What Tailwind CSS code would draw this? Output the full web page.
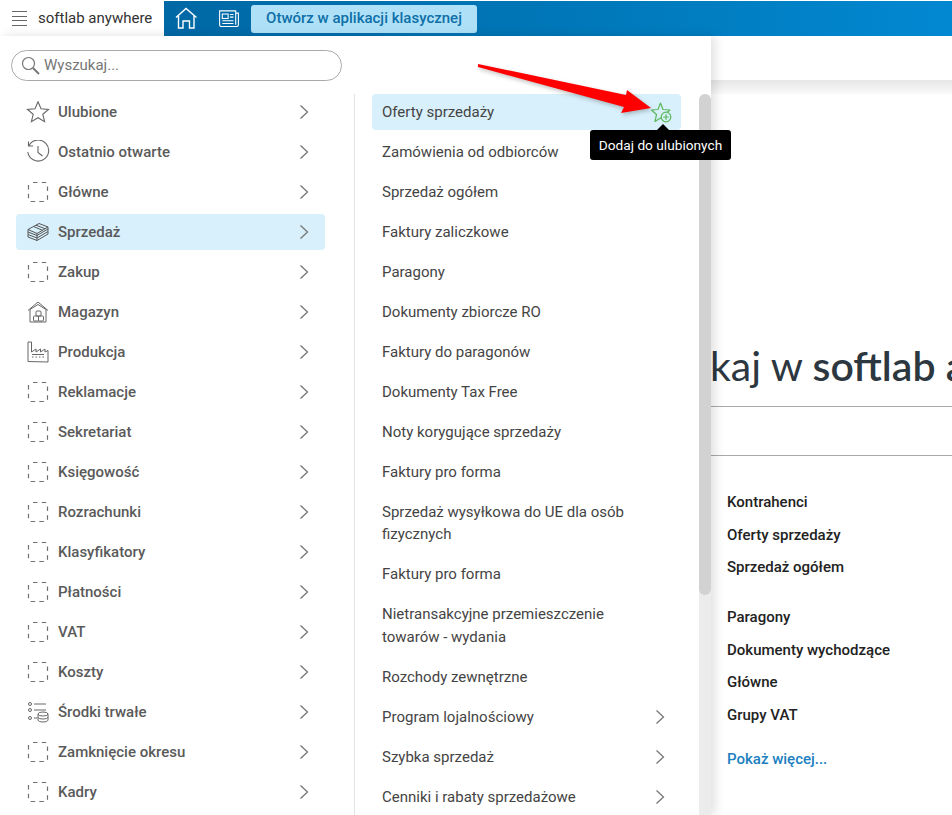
<!DOCTYPE html>
<html lang="pl">
<head>
    <meta charset="UTF-8">
    <title>softlab anywhere</title>
    <script src="https://cdn.jsdelivr.net/npm/@tailwindcss/browser@4"></script>
</head>
<body class="bg-white font-['Roboto',sans-serif] overflow-hidden">
<svg class="hidden">
    <symbol id="dash" viewBox="0 0 22 22"><rect x="1.500" y="1.500" width="19" height="19" rx="2.500" fill="none" stroke="#707070" stroke-width="1.200" stroke-dasharray="4.500 4.200" stroke-dashoffset="-2"/></symbol>
    <symbol id="chev" viewBox="0 0 10 16"><path d="M1.500 1.500 8.500 8l-7 6.500" fill="none" stroke="#777" stroke-width="1.300"/></symbol>
</svg>
<div class="relative w-[952px] h-[815px] overflow-hidden">

    <!-- top bar -->
    <header class="flex h-9 pt-px items-stretch">
        <div class="w-[164px] flex items-center bg-white pl-3">
            <div class="w-[15px] flex flex-col gap-[3.500px]">
                <span class="h-px bg-[#666]"></span><span class="h-px bg-[#666]"></span><span class="h-px bg-[#666]"></span><span class="h-px bg-[#666]"></span>
            </div>
            <span class="ml-[11px] text-[15px] text-[#333] whitespace-nowrap">softlab anywhere</span>
        </div>
        <div class="flex-1 flex items-center bg-gradient-to-r from-[#0068a5] via-[#0077b8] to-[#0288d1]">
            <svg class="ml-[10px] w-6 h-6" viewBox="0 0 24 24" fill="none" stroke="#fff" stroke-width="1.400"><path d="M2 10.500 12 1.500l10.500 9M4.500 9v12H9v-7h6.500v7H20V9"/></svg>
            <svg class="ml-5 w-[22px] h-[17px]" viewBox="0 0 23 19" fill="none" stroke="#fff" stroke-width="1.200"><path d="M19 3.500h3v13a2 2 0 0 1-2 2H3a2 2 0 0 1-2-2V1h18v15.500"/><rect x="4" y="4.500" width="6.500" height="5"/><path d="M12.500 5h4M12.500 8h4M4 12h12.500M4 15h12.500"/></svg>
            <button class="ml-[11px] w-[226px] h-7 rounded-[3px] bg-[#aee1f7] text-[#0f6fa8] text-[15px] font-medium">Otwórz w aplikacji klasycznej</button>
        </div>
    </header>

    <!-- page behind the menu -->
    <main class="pl-[711px]">
        <div class="h-11 bg-white"></div>
        <div class="h-[14px] bg-gradient-to-b from-[#e6e6e6] to-[#fafafa]"></div>
        <div class="relative h-[721px]">
            <h1 class="absolute left-[-64px] top-[247px] text-[41px] leading-[50px] text-[#2c3740] font-['Lato',sans-serif] whitespace-nowrap">Szukaj w <span class="font-semibold">softlab anywhere</span></h1>
            <div class="h-[313px] border-b border-[#aaa]"></div>
            <div class="h-[49px] border-b border-[#aaa]"></div>
            <ul class="pl-4 pt-[30px] text-[15px] font-medium text-[#222] leading-[32.500px]">
                <li>Kontrahenci</li>
                <li>Oferty sprzedaży</li>
                <li>Sprzedaż ogółem</li>
                <li class="mt-[17.500px]">Paragony</li>
                <li>Dokumenty wychodzące</li>
                <li>Główne</li>
                <li>Grupy VAT</li>
                <li class="mt-3 text-[#1b7fc0]">Pokaż więcej...</li>
            </ul>
        </div>
    </main>

    <!-- menu -->
    <aside class="absolute left-0 top-9 w-[711px] h-[779px] bg-white shadow-[4px_0_10px_rgba(0,0,0,0.12)]">
        <div class="ml-[11px] mt-[14px] w-[331px] h-[31px] rounded-full border border-[#aaa] flex items-center pl-[9px]">
            <svg class="w-[19px] h-[19px]" viewBox="0 0 19 19" fill="none" stroke="#777" stroke-width="1.200"><circle cx="7.500" cy="7.500" r="6"/><path d="m12 12 6 6" stroke-width="2"/></svg>
            <span class="ml-[4px] text-[15px] text-[#777]">Wyszukaj...</span>
        </div>
        <div class="mt-[13px] flex">
            <nav class="w-[355px] pl-4 pr-[29px] border-r border-[#e3e3e3] text-[15px] font-medium text-[#5a5a5a]">
                <a class="flex items-center h-9 mb-1 pl-[10px] pr-4">
                    <svg class="w-6 h-6 mr-2 shrink-0" viewBox="0 0 24 24" fill="none" stroke="#666" stroke-width="1.100"><path d="m12 1.800 3 7 7.500.6-5.700 4.900 1.800 7.400L12 17.700l-6.600 4 1.800-7.400L1.500 9.400 9 8.800z"/></svg>
                    <span class="flex-1">Ulubione</span><svg class="w-[10px] h-4"><use href="#chev"/></svg>
                </a>
                <a class="flex items-center h-9 mb-1 pl-[10px] pr-4">
                    <svg class="w-6 h-6 mr-2 shrink-0" viewBox="0 0 24 24" fill="none" stroke="#666" stroke-width="1.100"><path d="M3 5.500A10.500 10.500 0 1 1 1.800 12M2.500 1.500v4.500H7M12 6v6.500l4.500 3.500"/></svg>
                    <span class="flex-1">Ostatnio otwarte</span><svg class="w-[10px] h-4"><use href="#chev"/></svg>
                </a>
                <a class="flex items-center h-9 mb-1 pl-[10px] pr-4">
                    <svg class="w-[22px] h-[22px] ml-px mr-[9px] shrink-0"><use href="#dash"/></svg>
                    <span class="flex-1">Główne</span><svg class="w-[10px] h-4"><use href="#chev"/></svg>
                </a>
                <a class="flex items-center h-9 mb-1 pl-[10px] pr-4 rounded-[4px] bg-[#d8f0fb]">
                    <svg class="w-6 h-6 mr-2 shrink-0" viewBox="0 0 24 24" fill="none" stroke="#555" stroke-width="1"><path d="M2 9.500 13 3.500l9 3.500-11 6.500zM2 9.500v2.500l9 3.500 11-6.500V7M2 12v2.500l9 3.500 11-6.500V9M2 14.500V17l9 3.500L22 14v-2.500M11 13.500v7M7.500 6.500l9 3.800M10 5.200l9 3.500"/></svg>
                    <span class="flex-1">Sprzedaż</span><svg class="w-[10px] h-4"><use href="#chev"/></svg>
                </a>
                <a class="flex items-center h-9 mb-1 pl-[10px] pr-4">
                    <svg class="w-[22px] h-[22px] ml-px mr-[9px] shrink-0"><use href="#dash"/></svg>
                    <span class="flex-1">Zakup</span><svg class="w-[10px] h-4"><use href="#chev"/></svg>
                </a>
                <a class="flex items-center h-9 mb-1 pl-[10px] pr-4">
                    <svg class="w-6 h-6 mr-2 shrink-0" viewBox="0 0 24 24" fill="none" stroke="#666" stroke-width="1"><path d="M2 10.500 12 2l10 8.500M4 9.500 12 4.500l8 5M4 9.500V22h16V9.500"/><rect x="7.500" y="16" width="5" height="5" rx="1"/><rect x="12.500" y="16" width="5" height="5" rx="1"/><rect x="10" y="11" width="5" height="5" rx="1"/></svg>
                    <span class="flex-1">Magazyn</span><svg class="w-[10px] h-4"><use href="#chev"/></svg>
                </a>
                <a class="flex items-center h-9 mb-1 pl-[10px] pr-4">
                    <svg class="w-6 h-6 mr-2 shrink-0" viewBox="0 0 24 24" fill="none" stroke="#666" stroke-width="1"><path d="M2 21.500V2h3.500v10l4.500-3v3l4.500-3v3l4.500-3v3l3-1.500v11.500zM6 17h1.500M9.500 17H11M13 17h1.500M16.500 17H18M6 14.500h12"/></svg>
                    <span class="flex-1">Produkcja</span><svg class="w-[10px] h-4"><use href="#chev"/></svg>
                </a>
                <a class="flex items-center h-9 mb-1 pl-[10px] pr-4">
                    <svg class="w-[22px] h-[22px] ml-px mr-[9px] shrink-0"><use href="#dash"/></svg>
                    <span class="flex-1">Reklamacje</span><svg class="w-[10px] h-4"><use href="#chev"/></svg>
                </a>
                <a class="flex items-center h-9 mb-1 pl-[10px] pr-4">
                    <svg class="w-[22px] h-[22px] ml-px mr-[9px] shrink-0"><use href="#dash"/></svg>
                    <span class="flex-1">Sekretariat</span><svg class="w-[10px] h-4"><use href="#chev"/></svg>
                </a>
                <a class="flex items-center h-9 mb-1 pl-[10px] pr-4">
                    <svg class="w-[22px] h-[22px] ml-px mr-[9px] shrink-0"><use href="#dash"/></svg>
                    <span class="flex-1">Księgowość</span><svg class="w-[10px] h-4"><use href="#chev"/></svg>
                </a>
                <a class="flex items-center h-9 mb-1 pl-[10px] pr-4">
                    <svg class="w-[22px] h-[22px] ml-px mr-[9px] shrink-0"><use href="#dash"/></svg>
                    <span class="flex-1">Rozrachunki</span><svg class="w-[10px] h-4"><use href="#chev"/></svg>
                </a>
                <a class="flex items-center h-9 mb-1 pl-[10px] pr-4">
                    <svg class="w-[22px] h-[22px] ml-px mr-[9px] shrink-0"><use href="#dash"/></svg>
                    <span class="flex-1">Klasyfikatory</span><svg class="w-[10px] h-4"><use href="#chev"/></svg>
                </a>
                <a class="flex items-center h-9 mb-1 pl-[10px] pr-4">
                    <svg class="w-[22px] h-[22px] ml-px mr-[9px] shrink-0"><use href="#dash"/></svg>
                    <span class="flex-1">Płatności</span><svg class="w-[10px] h-4"><use href="#chev"/></svg>
                </a>
                <a class="flex items-center h-9 mb-1 pl-[10px] pr-4">
                    <svg class="w-[22px] h-[22px] ml-px mr-[9px] shrink-0"><use href="#dash"/></svg>
                    <span class="flex-1">VAT</span><svg class="w-[10px] h-4"><use href="#chev"/></svg>
                </a>
                <a class="flex items-center h-9 mb-1 pl-[10px] pr-4">
                    <svg class="w-[22px] h-[22px] ml-px mr-[9px] shrink-0"><use href="#dash"/></svg>
                    <span class="flex-1">Koszty</span><svg class="w-[10px] h-4"><use href="#chev"/></svg>
                </a>
                <a class="flex items-center h-9 mb-1 pl-[10px] pr-4">
                    <svg class="w-6 h-6 mr-2 shrink-0" viewBox="0 0 24 24" fill="none" stroke="#666" stroke-width="1"><circle cx="4" cy="4" r="1.500"/><circle cx="4" cy="10" r="1.500"/><circle cx="4" cy="18" r="1.500"/><path d="M8 4h12M8 10h12M8 18h3"/><ellipse cx="17" cy="14" rx="5" ry="2"/><path d="M12 14v6c0 1.200 2.200 2 5 2s5-.8 5-2v-6M12 17c0 1.200 2.200 2 5 2s5-.8 5-2"/></svg>
                    <span class="flex-1">Środki trwałe</span><svg class="w-[10px] h-4"><use href="#chev"/></svg>
                </a>
                <a class="flex items-center h-9 mb-1 pl-[10px] pr-4">
                    <svg class="w-[22px] h-[22px] ml-px mr-[9px] shrink-0"><use href="#dash"/></svg>
                    <span class="flex-1">Zamknięcie okresu</span><svg class="w-[10px] h-4"><use href="#chev"/></svg>
                </a>
                <a class="flex items-center h-9 mb-1 pl-[10px] pr-4">
                    <svg class="w-[22px] h-[22px] ml-px mr-[9px] shrink-0"><use href="#dash"/></svg>
                    <span class="flex-1">Kadry</span><svg class="w-[10px] h-4"><use href="#chev"/></svg>
                </a>
            </nav>

            <ul class="w-[344px] pl-[17px] pr-[18px] text-[15px] text-[#444] leading-[22.500px]">
                <li class="mb-1 px-[10px] py-[6.750px] rounded-[4px] bg-[#d8f0fb]">Oferty sprzedaży</li>
                <li class="mb-1 px-[10px] py-[6.750px]">Zamówienia od odbiorców</li>
                <li class="mb-1 px-[10px] py-[6.750px]">Sprzedaż ogółem</li>
                <li class="mb-1 px-[10px] py-[6.750px]">Faktury zaliczkowe</li>
                <li class="mb-1 px-[10px] py-[6.750px]">Paragony</li>
                <li class="mb-1 px-[10px] py-[6.750px]">Dokumenty zbiorcze RO</li>
                <li class="mb-1 px-[10px] py-[6.750px]">Faktury do paragonów</li>
                <li class="mb-1 px-[10px] py-[6.750px]">Dokumenty Tax Free</li>
                <li class="mb-1 px-[10px] py-[6.750px]">Noty korygujące sprzedaży</li>
                <li class="mb-1 px-[10px] py-[6.750px]">Faktury pro forma</li>
                <li class="mb-1 px-[10px] py-[6.750px]">Sprzedaż wysyłkowa do UE dla osób fizycznych</li>
                <li class="mb-1 px-[10px] py-[6.750px]">Faktury pro forma</li>
                <li class="mb-1 pl-[10px] pr-10 py-[6.750px]">Nietransakcyjne przemieszczenie towarów - wydania</li>
                <li class="mb-1 px-[10px] py-[6.750px]">Rozchody zewnętrzne</li>
                <li class="mb-1 pl-[10px] pr-4 py-[6.750px] flex items-center"><span class="flex-1">Program lojalnościowy</span><svg class="w-[10px] h-4"><use href="#chev"/></svg></li>
                <li class="mb-1 pl-[10px] pr-4 py-[6.750px] flex items-center"><span class="flex-1">Szybka sprzedaż</span><svg class="w-[10px] h-4"><use href="#chev"/></svg></li>
                <li class="mb-1 pl-[10px] pr-4 py-[6.750px] flex items-center"><span class="flex-1">Cenniki i rabaty sprzedażowe</span><svg class="w-[10px] h-4"><use href="#chev"/></svg></li>
            </ul>

            <div class="w-3 h-[721px] bg-[#ececec] rounded-t-[6px]">
                <div class="h-[501px] bg-[#d2d2d2] rounded-[6px]"></div>
            </div>
        </div>
    </aside>

    <!-- favourite star + tooltip + annotation arrow -->
    <svg class="absolute left-[651px] top-[102px] w-[22px] h-[22px]" viewBox="0 0 22 22" fill="none" stroke="#5cb85c" stroke-width="1.200" stroke-linejoin="round"><path d="M9.500 1 12 7.500l7 .5-5.500 4.500L15 19.500 9.500 16 4 19.500l1.500-7L.5 8 7 7.500z"/><circle cx="15" cy="15" r="4.800" fill="#d8f0fb"/><path d="M15 12.200v5.600M12.200 15h5.600"/></svg>
    <div class="absolute left-[590px] top-[130px] w-[141px] h-[30px] rounded-[3px] bg-black text-white text-[13.700px] leading-[30px] text-center">Dodaj do ulubionych</div>
    <div class="absolute left-[657px] top-[124px] w-0 h-0 border-x-[6px] border-x-transparent border-b-[6px] border-b-black"></div>
    <svg class="absolute left-0 top-0 w-[952px] h-[815px] pointer-events-none drop-shadow-[1px_2px_2px_rgba(0,0,0,0.25)]" viewBox="0 0 952 815"><polygon points="478,64 626,95 627,90 651,108 621,113 624,107 478,67" fill="#f00"/></svg>
</div>
</body>
</html>
